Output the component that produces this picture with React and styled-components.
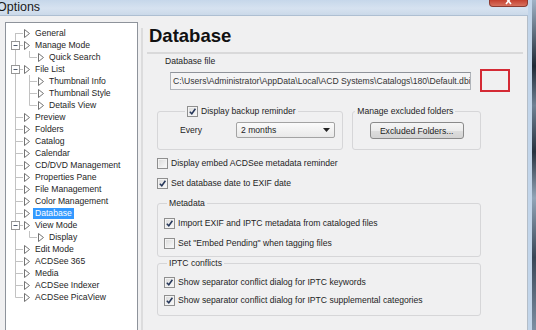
import React from 'react';
import styled, { createGlobalStyle } from 'styled-components';

const GlobalStyle = createGlobalStyle`
  html, body { margin: 0; padding: 0; }
  body {
    background: #f0f0f1;
    font-family: "Liberation Sans", Arial, sans-serif;
    font-size: 8.6px;
    color: #1e1e1e;
  }
`;

const Screen = styled.div`
  display: flex;
  width: 536px;
  height: 330px;
  overflow: hidden;
`;

const Window = styled.div`
  display: flex;
  flex-direction: column;
  width: 532px;
  flex-shrink: 0;
  box-sizing: border-box;
  border-right: 4px solid #c2d5ea;
`;

const Desktop = styled.div`
  flex: 1;
  background: linear-gradient(180deg, #9fb2c6 0%, #1f2a36 20%, #6f8194 32%, #27323f 46%, #92a5b8 60%, #384656 78%, #7d8fa3 100%);
`;

const TitleBar = styled.div`
  display: flex;
  align-items: flex-start;
  height: 15px;
  flex-shrink: 0;
  border-bottom: 1px solid #aebfd2;
  background: linear-gradient(180deg, #c6d7ea 0%, #d6e2f0 55%, #cbd9e9 100%);
`;

const Caption = styled.span`
  margin-left: -3px;
  font-size: 12.5px;
  line-height: 15px;
  color: #1a1a1a;
`;

const CloseButton = styled.div`
  margin-left: auto;
  width: 39px;
  height: 7px;
  box-sizing: border-box;
  border: 1px solid #8c3b31;
  border-top: none;
  border-radius: 0 0 4px 4px;
  background: linear-gradient(180deg, #c4402f, #d8725f);
  display: flex;
  justify-content: center;
`;

const Client = styled.div`
  flex: 1;
  display: flex;
  align-items: flex-start;
  min-height: 0;
  overflow: hidden;
  padding-left: 5px;
  border-right: 1px solid #b3bdc8;
  background: #f0f0f1;
`;

// ---------- tree ----------

const Tree = styled.div`
  flex-shrink: 0;
  width: 133px;
  height: 330px;
  margin-top: 6px;
  padding-top: 4px;
  box-sizing: border-box;
  border: 1px solid #8e939b;
  background: #fff;
`;

const TreeRow = styled.div`
  display: flex;
  align-items: center;
  height: 12px;
`;

const NodeLabel = styled.span`
  margin-left: 3px;
  padding: 0 2px;
  line-height: 11px;
  white-space: nowrap;
  color: ${p => (p.$selected ? '#fff' : '#1e1e1e')};
  background: ${p => (p.$selected ? '#3399ff' : 'transparent')};
`;

const LINE = '#c2c2c2';

const Connector = ({ level, first, lastRoot, expander, childLast }) => {
  if (level === 0) {
    return (
      <svg width="17" height="12" style={{ flexShrink: 0 }}>
        <line x1="9.5" y1={first ? 6 : 0} x2="9.5" y2={lastRoot ? 6.5 : 12} stroke={LINE} />
        <line x1="9.5" y1="6.5" x2="17" y2="6.5" stroke={LINE} />
        {expander && (
          <>
            <rect x="5.5" y="2.5" width="8" height="8" fill="#fff" stroke="#979797" />
            <line x1="7.5" y1="6.5" x2="11.5" y2="6.5" stroke="#4f5b6d" />
          </>
        )}
      </svg>
    );
  }
  return (
    <svg width="31" height="12" style={{ flexShrink: 0 }}>
      <line x1="9.5" y1="0" x2="9.5" y2="12" stroke={LINE} />
      <line x1="23.5" y1="0" x2="23.5" y2={childLast ? 6.5 : 12} stroke={LINE} />
      <line x1="23.5" y1="6.5" x2="31" y2="6.5" stroke={LINE} />
    </svg>
  );
};

const NodeIcon = () => (
  <svg width="6" height="9" style={{ flexShrink: 0, marginLeft: 1 }}>
    <polygon points="0.5,0.5 5.5,4.5 0.5,8.5" fill="#fff" stroke="#737373" />
  </svg>
);

const treeItems = [
  { label: 'General', level: 0, first: true },
  { label: 'Manage Mode', level: 0, expander: true },
  { label: 'Quick Search', level: 1, childLast: true },
  { label: 'File List', level: 0, expander: true },
  { label: 'Thumbnail Info', level: 1 },
  { label: 'Thumbnail Style', level: 1 },
  { label: 'Details View', level: 1, childLast: true },
  { label: 'Preview', level: 0 },
  { label: 'Folders', level: 0 },
  { label: 'Catalog', level: 0 },
  { label: 'Calendar', level: 0 },
  { label: 'CD/DVD Management', level: 0 },
  { label: 'Properties Pane', level: 0 },
  { label: 'File Management', level: 0 },
  { label: 'Color Management', level: 0 },
  { label: 'Database', level: 0, selected: true },
  { label: 'View Mode', level: 0, expander: true },
  { label: 'Display', level: 1, childLast: true },
  { label: 'Edit Mode', level: 0 },
  { label: 'ACDSee 365', level: 0 },
  { label: 'Media', level: 0 },
  { label: 'ACDSee Indexer', level: 0 },
  { label: 'ACDSee PicaView', level: 0, lastRoot: true },
];

// ---------- right page ----------

const Page = styled.div`
  flex: 1;
  align-self: stretch;
  display: flex;
  flex-direction: column;
  margin: 12px 0 0 3px;
  border-left: 2px solid #dcdcdd;
`;

const Heading = styled.h1`
  margin: 0 0 0 6px;
  font-size: 18.5px;
  font-weight: bold;
  line-height: 16px;
  color: #111;
`;

const Rule = styled.div`
  height: 2px;
  margin: 8px 4px 0 4px;
  background: #d9d9da;
`;

const FieldLabel = styled.div`
  margin: 1px 0 0 22px;
  line-height: 12px;
`;

const FileRow = styled.div`
  display: flex;
  align-items: center;
  margin: 2px 0 0 27px;
`;

const PathBox = styled.div`
  width: 301px;
  height: 18px;
  box-sizing: border-box;
  padding: 0 2px;
  border: 1px solid #b0b4ba;
  border-top-color: #8f939a;
  background: #f4f4f5;
  line-height: 16px;
  white-space: nowrap;
  overflow: hidden;
  color: #333;
`;

const Callout = styled.div`
  width: 30px;
  height: 23px;
  margin-left: 9px;
  box-sizing: border-box;
  border: 2px solid #d42a35;
`;

const Content = styled.div`
  display: flex;
  flex-direction: column;
  width: 324px;
  margin-left: 14px;
`;

const GroupsRow = styled.div`
  display: flex;
  gap: 9px;
  margin-top: 13px;
`;

const Group = styled.fieldset`
  width: ${p => p.$w}px;
  margin: ${p => p.$mt || 0}px 0 0 0;
  padding: ${p => p.$pad};
  box-sizing: border-box;
  min-inline-size: 0;
  border: 1px solid #d6d6d8;
  border-radius: 3px;
`;

const Legend = styled.legend`
  display: flex;
  align-items: center;
  gap: 3px;
  margin-left: ${p => p.$indent}px;
  padding: 0 2px;
  line-height: 12px;
  height: 12px;
`;

const CheckRow = styled.div`
  display: flex;
  align-items: center;
  gap: 3px;
  height: 12px;
  margin-top: ${p => p.$mt || 0}px;
  white-space: nowrap;
`;

const Box = styled.span`
  display: inline-flex;
  align-items: center;
  justify-content: center;
  flex-shrink: 0;
  width: 11px;
  height: 11px;
  box-sizing: border-box;
  border: 1px solid #8f8f8f;
  box-shadow: inset 0 0 0 1px #f3f3f3;
  background: linear-gradient(135deg, #d9d9d9, #fbfbfb);
`;

const Check = ({ checked }) => (
  <Box>
    {checked && (
      <svg width="9" height="9">
        <path d="M1.8 4.8 L3.8 6.8 L7.4 1.8" fill="none" stroke="#26375a" strokeWidth="1.5" />
      </svg>
    )}
  </Box>
);

const InlineRow = styled.div`
  display: flex;
  align-items: center;
`;

const EveryLabel = styled.span`
  width: 56px;
`;

const Select = styled.div`
  display: flex;
  align-items: center;
  justify-content: space-between;
  width: 99px;
  height: 16px;
  box-sizing: border-box;
  padding: 0 4px 0 4px;
  border: 1px solid #a3a3a3;
  border-radius: 2px;
  background: linear-gradient(180deg, #fbfbfb, #e9e9e9);
`;

const Centered = styled.div`
  display: flex;
  justify-content: center;
`;

const PushButton = styled.button`
  width: 94px;
  height: 17px;
  padding: 0;
  font: inherit;
  color: #1c1c1c;
  border: 1px solid #8a8a8a;
  border-radius: 3px;
  background: linear-gradient(180deg, #f5f5f5 0%, #ececec 50%, #dedede 50%, #d4d4d4 100%);
`;

export default function App() {
  return (
    <>
      <GlobalStyle />
      <Screen>
        <Window>
          <TitleBar>
            <Caption>Options</Caption>
            <CloseButton>
              <svg width="8" height="6">
                <path d="M1 -2 L6 4 M6 -2 L1 4" stroke="#fff" strokeWidth="1.6" />
              </svg>
            </CloseButton>
          </TitleBar>
          <Client>
            <Tree>
              {treeItems.map(item => (
                <TreeRow key={item.label}>
                  <Connector {...item} />
                  <NodeIcon />
                  <NodeLabel $selected={item.selected}>{item.label}</NodeLabel>
                </TreeRow>
              ))}
            </Tree>
            <Page>
              <Heading>Database</Heading>
              <Rule />
              <FieldLabel>Database file</FieldLabel>
              <FileRow>
                <PathBox>C:\Users\Administrator\AppData\Local\ACD Systems\Catalogs\180\Default.dbi</PathBox>
                <Callout />
              </FileRow>
              <Content>
                <GroupsRow>
                  <Group $w={188} $pad="5px 0 11px 22px">
                    <Legend $indent={5}>
                      <Check checked />
                      Display backup reminder
                    </Legend>
                    <InlineRow>
                      <EveryLabel>Every</EveryLabel>
                      <Select>
                        2 months
                        <svg width="7" height="4">
                          <polygon points="0,0 7,0 3.5,4" fill="#222" />
                        </svg>
                      </Select>
                    </InlineRow>
                  </Group>
                  <Group $w={130} $pad="5px 0 10px 0">
                    <Legend $indent={2}>Manage excluded folders</Legend>
                    <Centered>
                      <PushButton>Excluded Folders...</PushButton>
                    </Centered>
                  </Group>
                </GroupsRow>
                <CheckRow $mt={7}>
                  <Check />
                  Display embed ACDSee metadata reminder
                </CheckRow>
                <CheckRow $mt={8}>
                  <Check checked />
                  Set database date to EXIF date
                </CheckRow>
                <Group $w={324} $mt={8} $pad="8px 0 7px 6px">
                  <Legend $indent={3}>Metadata</Legend>
                  <CheckRow>
                    <Check checked />
                    Import EXIF and IPTC metadata from cataloged files
                  </CheckRow>
                  <CheckRow $mt={8}>
                    <Check />
                    Set "Embed Pending" when tagging files
                  </CheckRow>
                </Group>
                <Group $w={324} $pad="7px 0 9px 6px">
                  <Legend $indent={3}>IPTC conflicts</Legend>
                  <CheckRow>
                    <Check checked />
                    Show separator conflict dialog for IPTC keywords
                  </CheckRow>
                  <CheckRow $mt={6}>
                    <Check checked />
                    Show separator conflict dialog for IPTC supplemental categories
                  </CheckRow>
                </Group>
              </Content>
            </Page>
          </Client>
        </Window>
        <Desktop />
      </Screen>
    </>
  );
}
